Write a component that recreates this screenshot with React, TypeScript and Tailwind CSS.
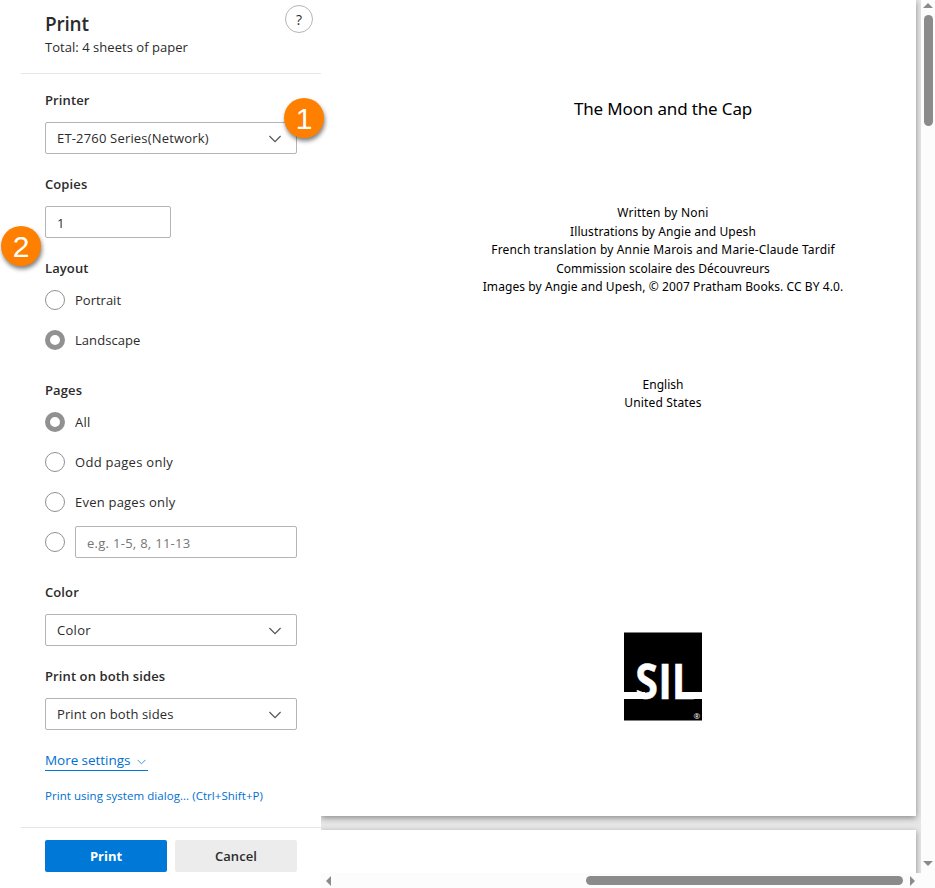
import React from "react";

const ui = "font-['Open_Sans','Noto_Sans',sans-serif]";

function Label({ children, className = "" }: { children: React.ReactNode; className?: string }) {
  return <div className={`h-5 text-[13px] leading-5 font-semibold tracking-[0.1px] whitespace-nowrap ${className}`}>{children}</div>;
}

function Select({ value, className = "", textClass = "" }: { value: string; className?: string; textClass?: string }) {
  return (
    <div className={`flex h-8 w-[252px] items-center justify-between rounded-[2px] border border-[#b5b5b5] bg-white pr-[15px] pl-[11px] text-[13px] leading-5 ${className}`}>
      <span className={`whitespace-nowrap ${textClass}`}>{value}</span>
      <svg className="mt-px" width="12" height="8" viewBox="0 0 12 8" fill="none" stroke="#555" strokeWidth="1.2">
        <path d="M0.4 1 L6 6.6 L11.6 1" />
      </svg>
    </div>
  );
}

function Radio({ label, checked = false, className = "" }: { label: string; checked?: boolean; className?: string }) {
  return (
    <div className={`flex h-5 items-center gap-[10px] text-[13px] leading-5 ${className}`}>
      <RadioDot checked={checked} />
      <span className="whitespace-nowrap">{label}</span>
    </div>
  );
}

function RadioDot({ checked = false }: { checked?: boolean }) {
  return (
    <span
      className={`block size-5 shrink-0 rounded-full bg-white ${checked ? "border-[5px] border-[#919191]" : "border border-[#919191]"}`}
    />
  );
}

function Badge({ children, className }: { children: React.ReactNode; className: string }) {
  return (
    <div className={`absolute flex size-10 items-center justify-center rounded-full bg-[#ff8000] pt-px font-['Liberation_Sans',Arial,sans-serif] text-[30px] leading-none text-white shadow-[1px_3px_4px_rgba(0,0,0,0.5)] ${className}`}>
      {children}
    </div>
  );
}

function Logo() {
  return (
    <svg width="78" height="89" viewBox="0 0 78 89">
      <rect y="0.5" width="78" height="88" fill="#000" />
      <rect x="0" y="60" width="21" height="7" fill="#fff" />
      <rect x="54" y="60" width="24" height="7" fill="#fff" />
      <text
        x="13.3 40.2 56.1"
        y="66.7"
        transform="scale(0.85 1)"
        fill="#fff"
        stroke="#fff"
        strokeWidth="0.5"
        fontFamily="'Open Sans', 'Noto Sans', sans-serif"
        fontWeight="700"
        fontSize="48.5"
      >
        SIL
      </text>
      <text x="69.5" y="86.5" fill="#fff" fontFamily="'Open Sans', sans-serif" fontSize="8">®</text>
    </svg>
  );
}

function Sidebar() {
  return (
    <aside className="flex h-full w-[321px] shrink-0 flex-col bg-white pl-[21px]">
      <header className="flex h-[74px] shrink-0 justify-between border-b border-[#e6e6e6] pr-2 pl-6">
        <div className="pt-[10px]">
          <h1 className="text-[19px] leading-7 font-semibold tracking-[-0.2px]">Print</h1>
          <p className="text-[13px] leading-[18px] tracking-[0.04px] whitespace-nowrap">Total: 4 sheets of paper</p>
        </div>
        <div className="mt-[5px] flex size-7 items-center justify-center rounded-full border border-[#b5b5b5] text-[14px]">?</div>
      </header>

      <div className="flex grow flex-col pt-4 pl-6">
        <Label>Printer</Label>
        <Select value="ET-2760 Series(Network)" className="mt-3" textClass="tracking-[0.18px]" />
        <Label className="mt-5">Copies</Label>
        <div className="mt-3 flex h-8 w-[126px] items-center rounded-[2px] border border-[#b5b5b5] pt-[3px] pl-[11px] text-[13px]">1</div>
        <Label className="mt-5">Layout</Label>
        <Radio label="Portrait" className="mt-3" />
        <Radio label="Landscape" checked className="mt-5 tracking-[0.05px]" />
        <Label className="mt-[30px]">Pages</Label>
        <Radio label="All" checked className="mt-3 tracking-[0.2px]" />
        <Radio label="Odd pages only" className="mt-5 tracking-[0.28px]" />
        <Radio label="Even pages only" className="mt-5 tracking-[0.22px]" />
        <div className="mt-[14px] flex items-center gap-[10px]">
          <RadioDot />
          <div className="flex h-8 w-[222px] items-center rounded-[2px] border border-[#b5b5b5] pt-[3px] pl-[11px] text-[13px] tracking-[0.28px] text-[#767676]">
            e.g. 1-5, 8, 11-13
          </div>
        </div>
        <Label className="mt-6">Color</Label>
        <Select value="Color" className="mt-3" textClass="tracking-[0.3px]" />
        <Label className="mt-5">Print on both sides</Label>
        <Select value="Print on both sides" className="mt-3" textClass="tracking-[0.12px]" />
        <a className="mt-5 flex h-[21px] w-[103px] items-center justify-between border-b border-[#0078d7] pr-[2px] text-[13.5px] leading-5 tracking-[-0.05px] whitespace-nowrap text-[#0070cf]">
          More settings
          <svg className="mt-1" width="9" height="6" viewBox="0 0 9 6" fill="none" stroke="#3c98e2" strokeWidth="1">
            <path d="M0.5 0.8 L4.5 4.8 L8.5 0.8" />
          </svg>
        </a>
        <a className="mt-[15px] text-[11.5px] leading-5 tracking-[0.05px] whitespace-nowrap text-[#0070cf]">Print using system dialog... (Ctrl+Shift+P)</a>
      </div>

      <footer className="flex h-[61px] shrink-0 gap-2 border-t border-[#e6e6e6] pt-3 pl-6 text-[13px] font-semibold">
        <button className="h-8 w-[122px] rounded-[2px] bg-[#0078d7] pt-px font-bold text-white">Print</button>
        <button className="h-8 w-[122px] rounded-[2px] bg-[#ececec] pt-px tracking-[0.1px]">Cancel</button>
      </footer>
    </aside>
  );
}

function Preview() {
  return (
    <main className="flex h-[873px] w-[600px] shrink-0 flex-col gap-[14px] overflow-hidden bg-[#e6e6e6] font-['Noto_Sans',sans-serif] text-black">
      <section className="flex h-[816px] w-[595px] shrink-0 flex-col items-center bg-white pl-[89px] text-[12px] leading-[18.5px] whitespace-nowrap shadow-[0_2px_6px_rgba(0,0,0,0.4)]">
        <h2 className="mt-[97px] text-[17px] leading-6 tracking-[-0.15px]">The Moon and the Cap</h2>
        <div className="mt-[83px] flex flex-col items-center">
          <p className="tracking-[0.2px]">Written by Noni</p>
          <p className="tracking-[0.1px]">Illustrations by Angie and Upesh</p>
          <p className="tracking-[0.17px]">French translation by Annie Marois and Marie-Claude Tardif</p>
          <p>Commission scolaire des Découvreurs</p>
          <p className="tracking-[0.08px]">Images by Angie and Upesh, © 2007 Pratham Books. CC BY 4.0.</p>
        </div>
        <div className="mt-[79px] flex flex-col items-center">
          <p>English</p>
          <p className="tracking-[0.15px]">United States</p>
        </div>
        <div className="mt-[219px]">
          <Logo />
        </div>
      </section>
      <section className="h-[100px] w-[595px] shrink-0 bg-white shadow-[0_2px_6px_rgba(0,0,0,0.4)]" />
    </main>
  );
}

export default function App() {
  return (
    <div className={`relative flex h-[888px] w-[935px] overflow-hidden bg-white text-[#2b2b2b] ${ui}`}>
      <Sidebar />
      <div className="flex flex-col">
        <div className="flex">
          <Preview />
          <div className="flex w-[14px] flex-col items-center bg-[#fcfcfc]">
            <svg className="mt-[3px] shrink-0" width="10" height="5" viewBox="0 0 10 5"><path d="M0 5 L5 0 L10 5Z" fill="#8b8b8b" /></svg>
            <div className="mt-[7px] ml-px h-[111px] w-[9px] shrink-0 rounded-full bg-[#8b8b8b]" />
            <svg className="mt-auto mb-[7px] shrink-0" width="10" height="5" viewBox="0 0 10 5"><path d="M0 0 L5 5 L10 0Z" fill="#8b8b8b" /></svg>
          </div>
        </div>
        <div className="flex h-[15px] w-[614px] items-center bg-[#fcfcfc]">
          <svg className="ml-[5px]" width="5" height="10" viewBox="0 0 5 10"><path d="M5 0 L0 5 L5 10Z" fill="#8b8b8b" /></svg>
          <div className="ml-[255px] h-[9px] w-[317px] rounded-full bg-[#8b8b8b]" />
          <svg className="ml-[7px]" width="5" height="10" viewBox="0 0 5 10"><path d="M0 0 L5 5 L0 10Z" fill="#8b8b8b" /></svg>
        </div>
      </div>
      <Badge className="top-[98px] left-[284px]">1</Badge>
      <Badge className="top-[226px] left-px">2</Badge>
    </div>
  );
}
